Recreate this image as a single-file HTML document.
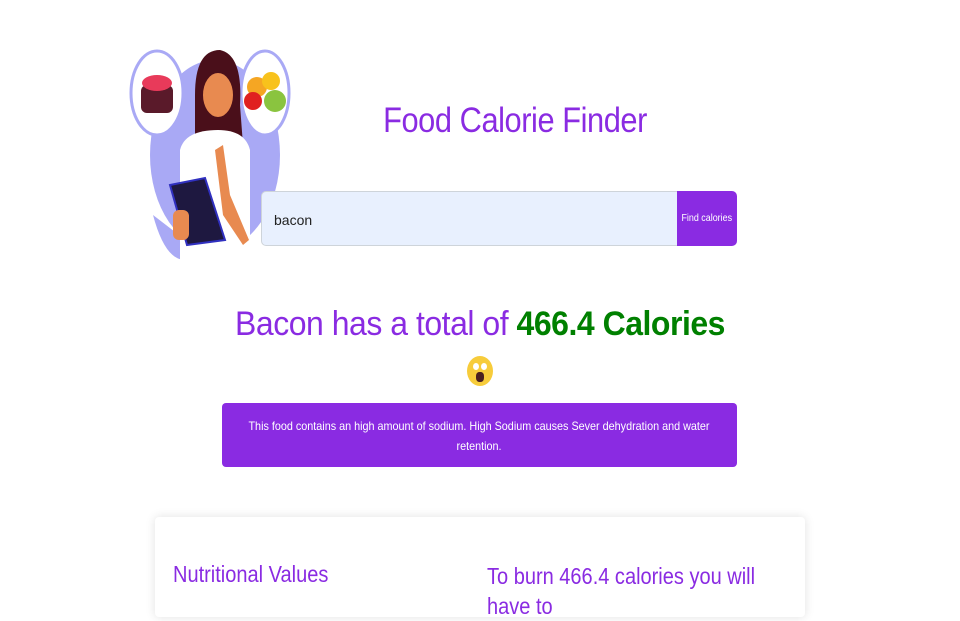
<!DOCTYPE html>
<html><head><meta charset="utf-8"><style>
*{margin:0;padding:0;box-sizing:border-box}
body{width:960px;height:600px;overflow:hidden;background:#fff;font-family:"Liberation Sans",sans-serif;position:relative}
.abs{position:absolute}
.title{left:330px;top:101px;width:370px;text-align:center;font-size:35px;color:#8a2be2;font-weight:300;letter-spacing:-0.5px;transform:scaleX(.88)}
.input{left:261px;top:191px;width:417px;height:55px;background:#e8f0fe;border:1px solid #ced4da;border-radius:5px 0 0 5px;font-size:14px;color:#222;padding:20px 12px}
.btn{left:677px;top:191px;width:60px;height:55px;background:#8a2be2;border-radius:0 5px 5px 0;color:#fff;font-size:10.5px;text-align:center;line-height:55px;white-space:nowrap;overflow:hidden}
.btn span{display:inline-block;transform:scaleX(.85)}
.h{left:130px;top:305px;width:700px;text-align:center;font-size:34px;color:#8a2be2;letter-spacing:-0.5px;transform:scaleX(.94)}
.h b{color:#008000}
.alert{left:222px;top:403px;width:515px;height:64px;background:#8a2be2;border-radius:4px;color:#fff;font-size:12px;text-align:center;padding:13px 20px;line-height:20px}
.alert span{display:inline-block;transform:scaleX(.9);width:530px;margin-left:-28px}
.card{left:155px;top:517px;width:650px;height:100px;background:#fff;border-radius:4px;box-shadow:0 0 10px rgba(0,0,0,.12)}
.c1{left:173px;top:561px;font-size:23px;color:#8a2be2;transform:scaleX(.87);transform-origin:left}
.c2{left:487px;top:561px;font-size:23px;color:#8a2be2;transform:scaleX(.87);transform-origin:left;line-height:30px;width:330px}
</style></head><body>
<svg class="abs" style="left:125px;top:45px" width="175" height="220" viewBox="0 0 175 220">
<ellipse cx="90" cy="110" rx="65" ry="95" fill="#a9a9f5"/>
<path d="M28 170 Q40 215 60 215 L80 210 Z" fill="#a9a9f5"/>
<ellipse cx="32" cy="48" rx="26" ry="42" fill="#fff" stroke="#a9a9f5" stroke-width="3"/>
<ellipse cx="140" cy="48" rx="24" ry="42" fill="#fff" stroke="#a9a9f5" stroke-width="3"/>
<rect x="16" y="40" width="32" height="28" rx="6" fill="#5a1a2a"/>
<ellipse cx="32" cy="38" rx="15" ry="8" fill="#e83a5a"/>
<circle cx="132" cy="42" r="10" fill="#f5a623"/><circle cx="146" cy="36" r="9" fill="#f8c21c"/>
<circle cx="128" cy="56" r="9" fill="#e02020"/><circle cx="150" cy="56" r="11" fill="#8ac43f"/>
<path d="M70 50 Q70 5 95 5 Q118 10 115 60 L118 100 L70 100 Z" fill="#4a0f1a"/>
<ellipse cx="93" cy="50" rx="15" ry="22" fill="#e88a50"/>
<path d="M55 105 Q60 85 93 85 Q120 85 125 105 L125 215 L55 215 Z" fill="#fff"/>
<path d="M45 140 L80 133 L100 195 L62 200 Z" fill="#1e1840" stroke="#3030c0" stroke-width="2"/>
<path d="M90 105 L98 170 L118 200 L124 195 L105 150 L98 100 Z" fill="#e88a50"/>
<rect x="48" y="165" width="16" height="30" rx="6" fill="#e88a50"/>
</svg>
<div class="abs title">Food Calorie Finder</div>
<div class="abs input">bacon</div>
<div class="abs btn"><span>Find calories</span></div>
<div class="abs h">Bacon has a total of <b>466.4 Calories</b></div>
<div class="abs" style="left:467px;top:356px;width:26px;height:30px;border-radius:50%;background:#f7cc3b"><div style="position:absolute;left:6px;top:7px;width:6px;height:7px;background:#fff;border-radius:50%"></div><div style="position:absolute;left:14px;top:7px;width:6px;height:7px;background:#fff;border-radius:50%"></div><div style="position:absolute;left:9px;top:16px;width:8px;height:10px;background:#4a2020;border-radius:40%"></div></div>
<div class="abs alert"><span>This food contains an high amount of sodium. High Sodium causes Sever dehydration and water retention.</span></div>
<div class="abs card"></div>
<div class="abs c1">Nutritional Values</div>
<div class="abs c2">To burn 466.4 calories you will have to</div>
</body></html>
